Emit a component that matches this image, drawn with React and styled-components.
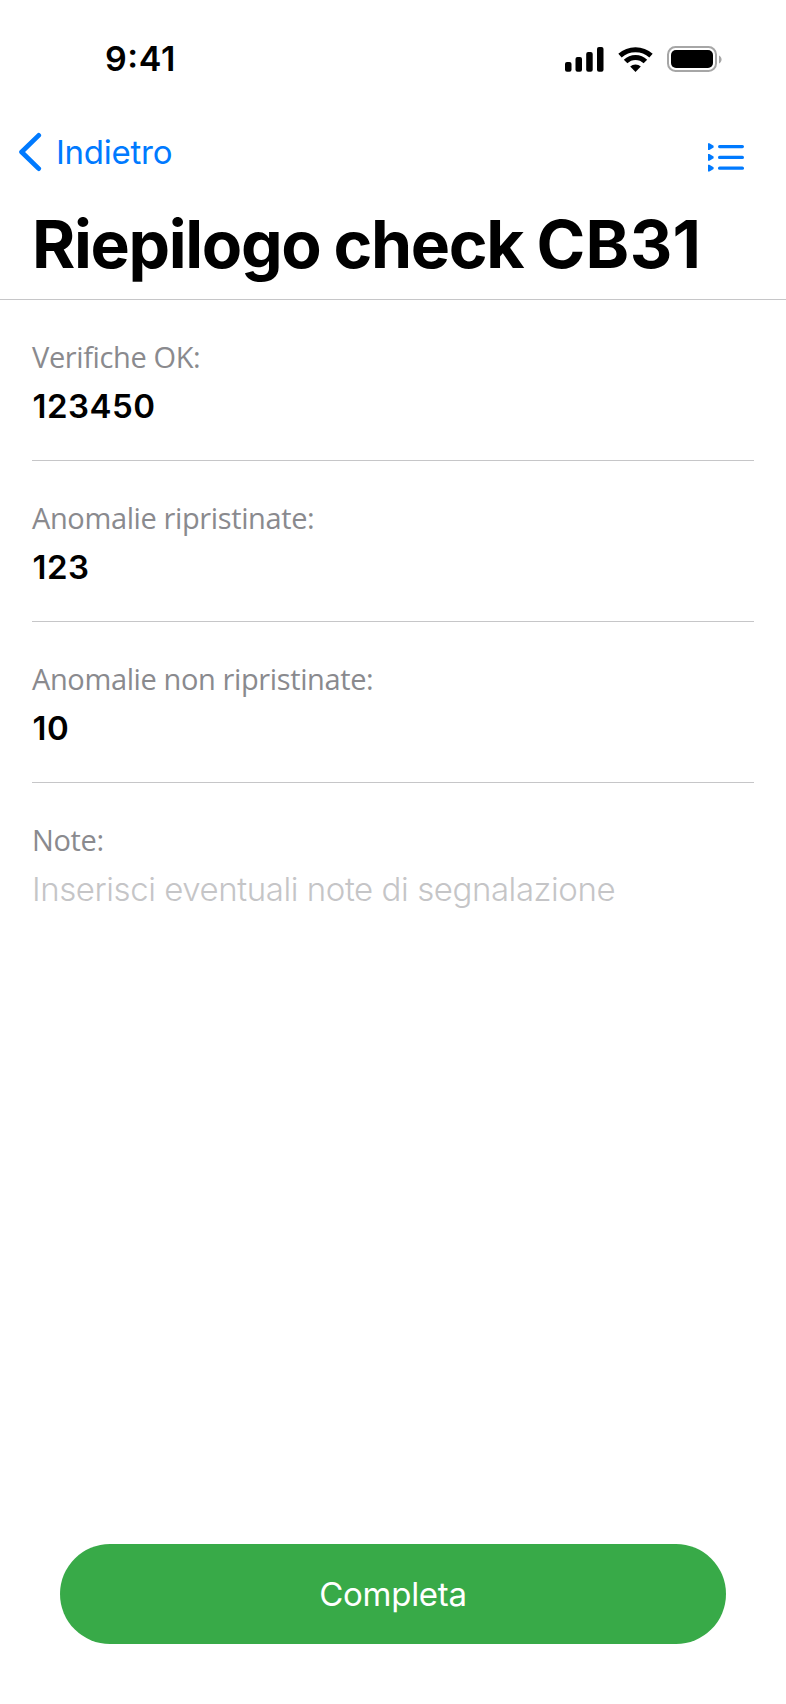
import React from "react";
import styled, { createGlobalStyle } from "styled-components";

const Global = createGlobalStyle`
  * { box-sizing: border-box; }
  body { margin: 0; background: #fff; }
  h1, p, dl, dt, dd { margin: 0; }
`;
const Screen = styled.div`
  width: 786px; height: 1704px; display: flex; flex-direction: column;
  background: #fff; color: #000; font-family: Inter, "Liberation Sans", sans-serif;
`;
const StatusBar = styled.header`
  height: 108px; padding: 39px 64px 0 105px; display: flex; justify-content: space-between; align-items: flex-start;
`;
const Time = styled.span`
  font-size: 34px; font-weight: 600; line-height: 40px; letter-spacing: 0.6px; font-feature-settings: "case" 1;
`;
const StatusIcons = styled.svg`width: 160px; height: 30px; margin-top: 6px; flex: none;`;
const NavBar = styled.nav`
  height: 88px; padding: 0 41px 0 18px; display: flex; justify-content: space-between; align-items: center; color: #007aff;
`;
const BackButton = styled.button`
  display: flex; align-items: center; gap: 14px; padding: 0; border: 0; background: none; color: inherit;
  font: 400 33px/44px Inter, "Liberation Sans", sans-serif; letter-spacing: -0.25px;
`;
const BackIcon = styled.svg`width: 24px; height: 40px; flex: none;`;
const ListButton = styled.button`padding: 0; margin-top: 10px; border: 0; background: none; color: inherit; display: flex;`;
const TitleBar = styled.div`height: 104px; padding: 8px 32px 0; border-bottom: 1px solid #c6c6c8;`;
const Title = styled.h1`
  font-size: 66px; font-weight: 700; line-height: 80px; letter-spacing: -1.36px; word-spacing: -1px; white-space: nowrap;
`;
const CheckCode = styled.span`letter-spacing: 0.35px;`;
const Fields = styled.dl`padding: 0 32px; flex: 1;`;
const Field = styled.div`height: 161px; padding-top: 33px; border-bottom: ${(p) => (p.$last ? "0" : "1px solid #c6c6c8")};`;
const Label = styled.dt`
  font: 400 29px/48px "Open Sans", "Noto Sans", sans-serif; letter-spacing: -0.38px; color: #8a8a8e; white-space: nowrap;
`;
const Value = styled.dd`
  margin-top: 1px; font-size: 33px; line-height: 48px; white-space: nowrap;
  padding-left: ${(p) => (p.$placeholder ? 0 : 0.6)}px;
  font-weight: ${(p) => (p.$placeholder ? 300 : 600)};
  letter-spacing: ${(p) => (p.$placeholder ? -0.43 : 0.5)}px;
  color: ${(p) => (p.$placeholder ? "#c5c5c7" : "#000")};
`;
const Footer = styled.footer`padding: 0 60px 60px;`;
const PrimaryButton = styled.button`
  width: 100%; height: 100px; border: 0; border-radius: 50px; background: #38aa48; color: #fff;
  font: 400 33px/44px Inter, "Liberation Sans", sans-serif; letter-spacing: -0.25px;
`;

const fields = [
  ["Verifiche OK:", "123450"],
  ["Anomalie ripristinate:", "123"],
  ["Anomalie non ripristinate:", "10"],
];

export default function App() {
  return (
    <Screen>
      <Global />
      <StatusBar>
        <Time>9:41</Time>
        <StatusIcons viewBox="562 45 160 30" aria-hidden="true">
          <rect x="565" y="62" width="6.5" height="9.8" rx="2" />
          <rect x="575.5" y="57" width="6.5" height="14.8" rx="2" />
          <rect x="586.2" y="52" width="6.5" height="19.8" rx="2" />
          <rect x="597" y="47" width="6.5" height="24.8" rx="2" />
          <g fill="none" stroke="#000" strokeWidth="5">
            <path d="M620 55.7 A23 23 0 0 1 651 55.7" />
            <path d="M625.6 61.6 A14 14 0 0 1 645.4 61.6" />
          </g>
          <path d="M635.5 72 L630.2 66.6 A7.6 7.6 0 0 1 640.8 66.6 Z" />
          <rect x="668" y="47" width="48" height="24" rx="7.5" fill="none" stroke="#a6a6a6" strokeWidth="2" />
          <rect x="671" y="50" width="42" height="18" rx="5" />
          <path d="M719 55.5 C722.4 57 722.4 62 719 63.5 Z" fill="#a6a6a6" />
        </StatusIcons>
      </StatusBar>
      <NavBar>
        <BackButton>
          <BackIcon viewBox="18 132 24 40" fill="none" stroke="currentColor" strokeWidth="4.8" strokeLinecap="round" strokeLinejoin="round">
            <path d="M38.7 135.4 L21.6 152 L38.7 168.6" />
          </BackIcon>
          Indietro
        </BackButton>
        <ListButton aria-label="Elenco">
          <svg width="38" height="30" viewBox="707 142 38 30" fill="currentColor">
            {[146.6, 157.4, 168.2].map((y) => (
              <g key={y}>
                <path d={`M708 ${y - 3.4} H709.4 L713.6 ${y - 0.9} V${y + 0.9} L709.4 ${y + 3.4} H708 Z`} />
                <rect x="718" y={y - 1.6} width="26" height="3.2" rx="1.6" />
              </g>
            ))}
          </svg>
        </ListButton>
      </NavBar>
      <TitleBar><Title>Riepilogo check <CheckCode>CB31</CheckCode></Title></TitleBar>
      <Fields>
        {fields.map(([label, value]) => (
          <Field key={label}><Label>{label}</Label><Value>{value}</Value></Field>
        ))}
        <Field $last>
          <Label>Note:</Label>
          <Value $placeholder>Inserisci eventuali note di segnalazione</Value>
        </Field>
      </Fields>
      <Footer><PrimaryButton>Completa</PrimaryButton></Footer>
    </Screen>
  );
}
